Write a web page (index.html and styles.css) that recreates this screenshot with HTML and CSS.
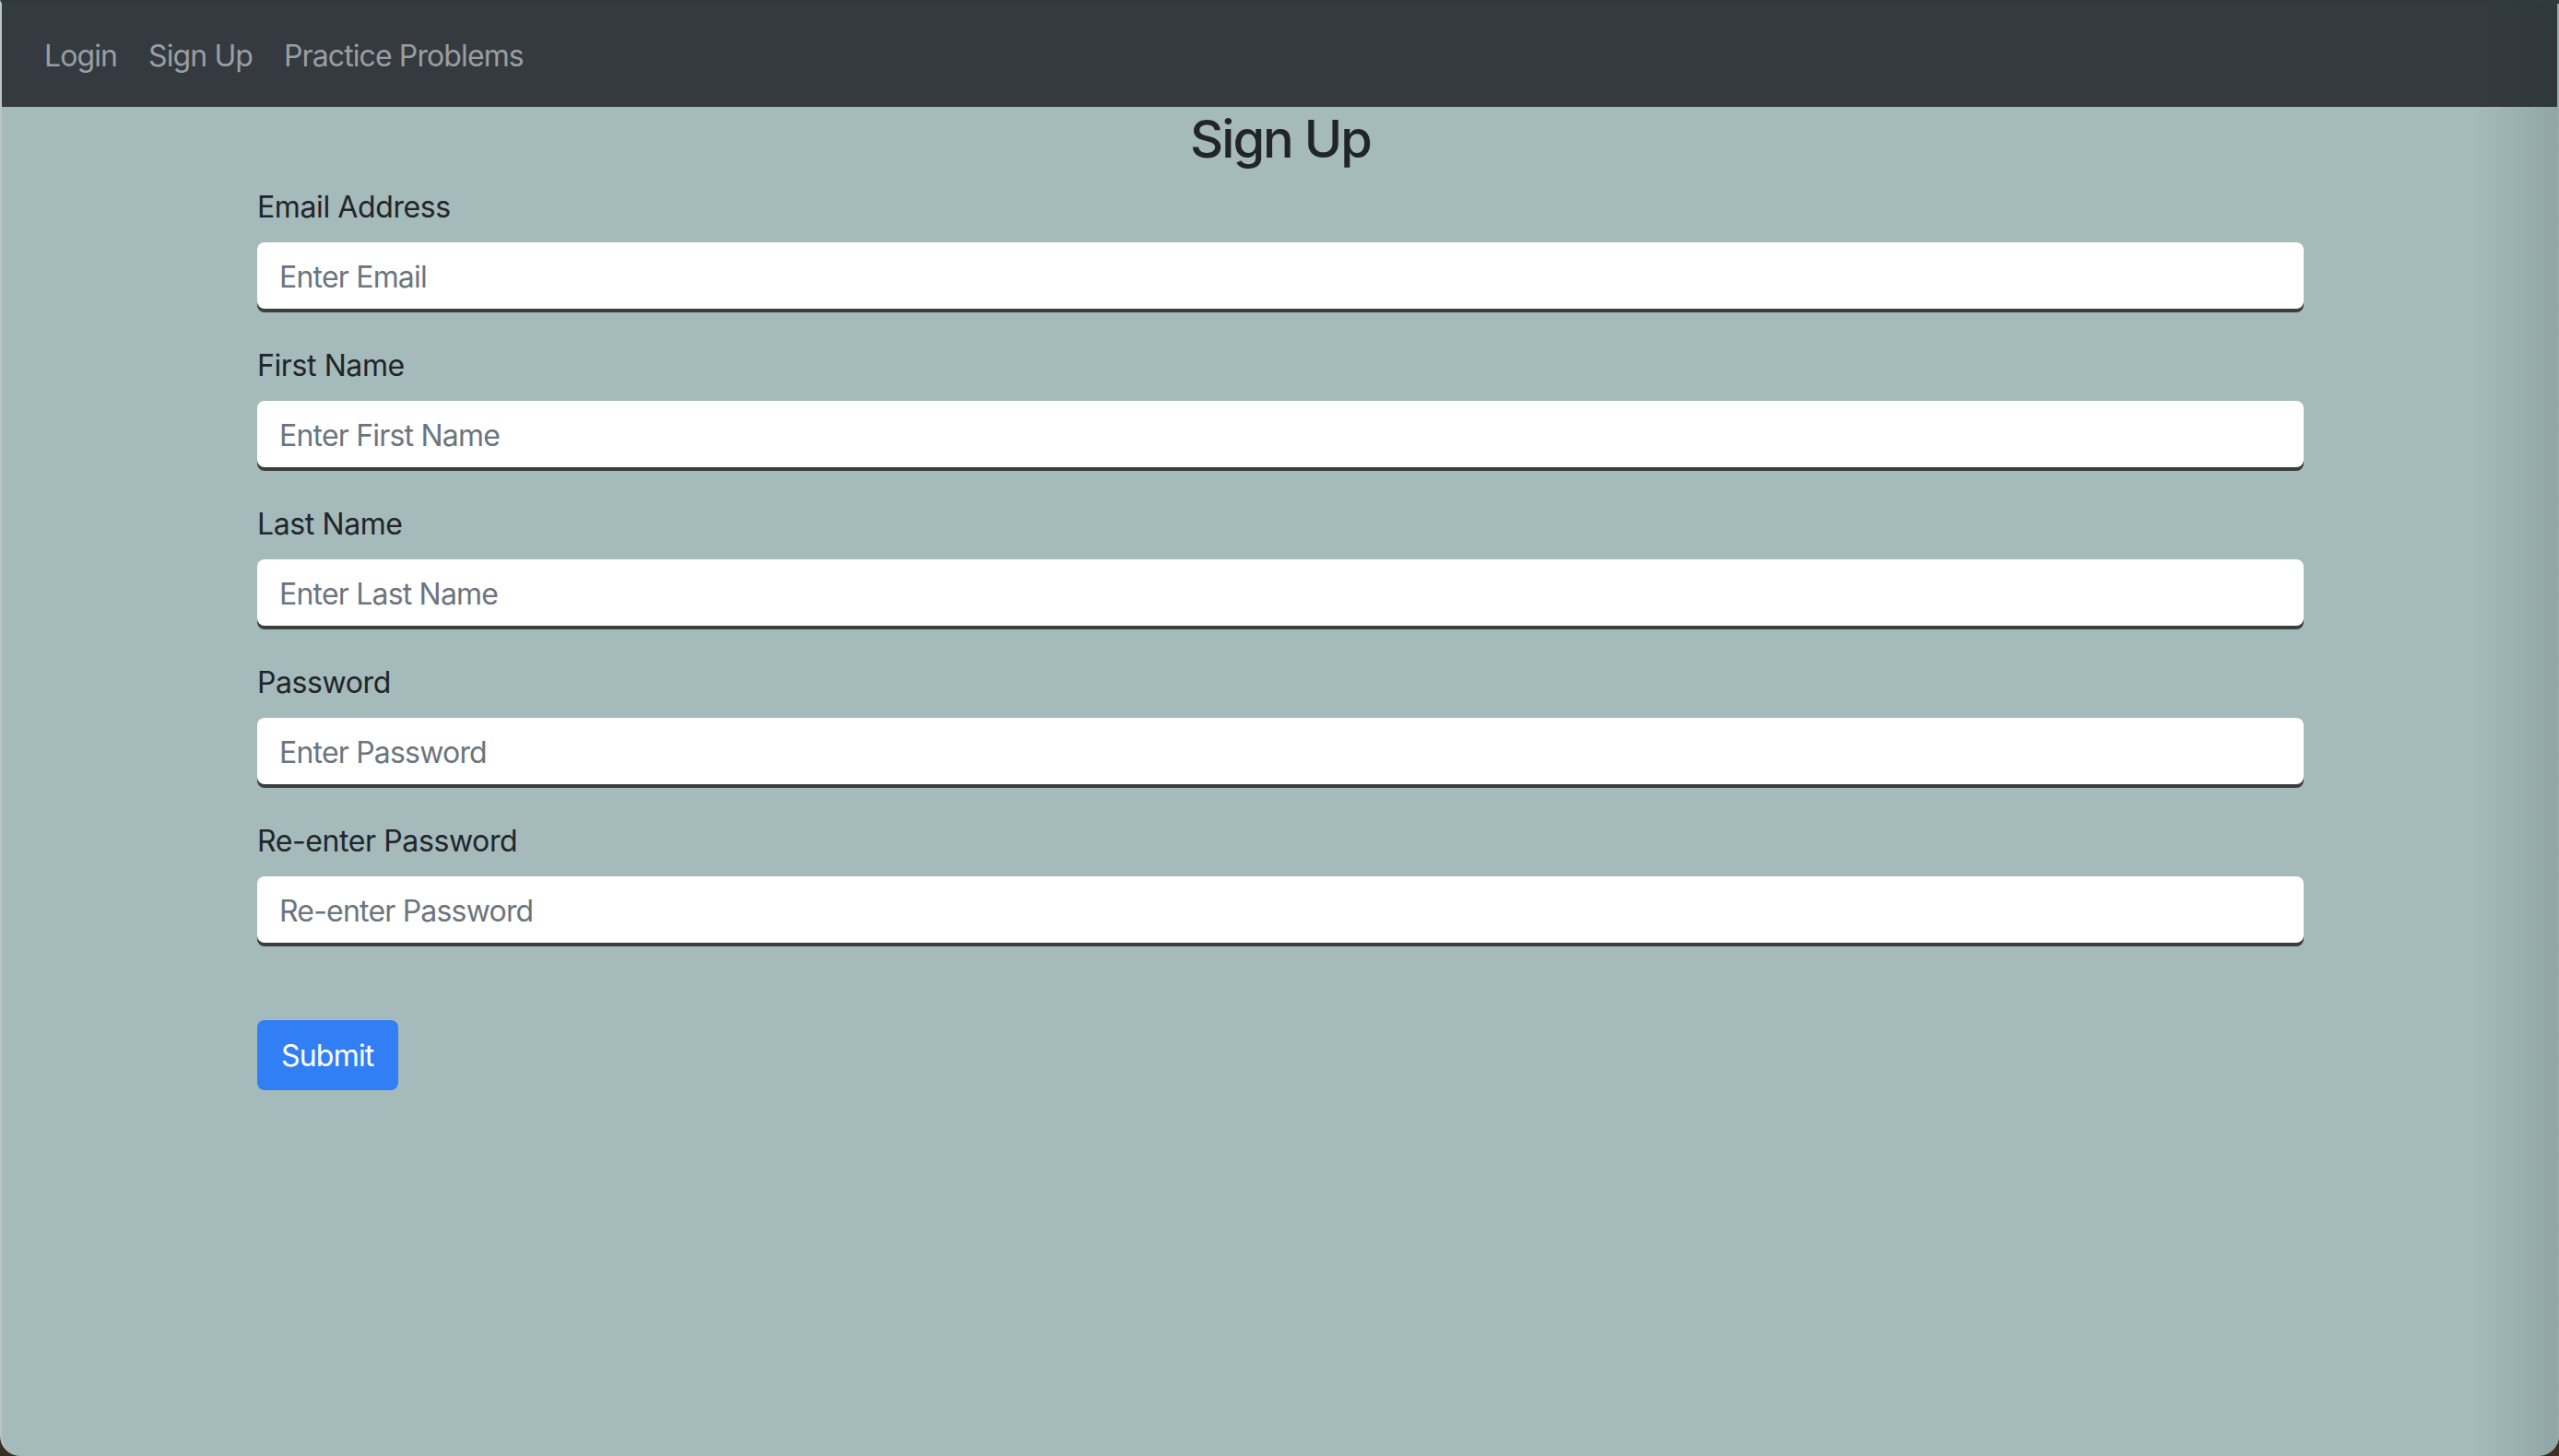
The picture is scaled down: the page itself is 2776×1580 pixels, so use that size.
FILE: index.html
```html
<!DOCTYPE html>
<html lang="en">
<head>
<meta charset="utf-8">
<title>Sign Up</title>
<link rel="stylesheet" href="styles.css">
</head>
<body>
<div class="window">
  <nav class="navbar">
    <a class="nav-link" href="#">Login</a>
    <a class="nav-link" href="#">Sign Up</a>
    <a class="nav-link" href="#">Practice Problems</a>
  </nav>
  <main class="container">
    <h3 class="title">Sign Up</h3>
    <form class="form">
      <div class="form-group">
        <label class="label" for="email">Email Address</label>
        <input class="form-control" id="email" type="email" placeholder="Enter Email">
      </div>
      <div class="form-group">
        <label class="label" for="first">First Name</label>
        <input class="form-control" id="first" type="text" placeholder="Enter First Name">
      </div>
      <div class="form-group">
        <label class="label" for="last">Last Name</label>
        <input class="form-control" id="last" type="text" placeholder="Enter Last Name">
      </div>
      <div class="form-group">
        <label class="label" for="pw">Password</label>
        <input class="form-control" id="pw" type="password" placeholder="Enter Password">
      </div>
      <div class="form-group">
        <label class="label" for="pw2">Re-enter Password</label>
        <input class="form-control" id="pw2" type="password" placeholder="Re-enter Password">
      </div>
      <button class="btn" type="submit">Submit</button>
    </form>
  </main>
  <div class="edge-shade"></div>
</div>
</body>
</html>
```
FILE: styles.css
```css
html, body {
  margin: 0;
  padding: 0;
  height: 100%;
  background: #3b301f;
}
body {
  font-family: Inter, "Liberation Sans", sans-serif;
  color: #212529;
  letter-spacing: -0.025em;
  overflow: hidden;
}
.window {
  position: relative;
  height: 1576px;
  background: #a5babb;
  border-top: 4px solid #2e3b38;
  border-left: 2px solid #b9c6c7;
  border-radius: 0 0 22px 22px;
  overflow: hidden;
  display: flex;
  flex-direction: column;
}
.navbar {
  background: #343a40;
  height: 112px;
  box-sizing: border-box;
  padding: 2px 30px 0 29px;
  display: flex;
  align-items: center;
}
.nav-link {
  color: #9a9ea2;
  text-decoration: none;
  font-size: 32px;
  line-height: 48px;
  letter-spacing: -0.028em;
  padding: 0 17px;
}
.container {
  width: 2220px;
  margin: 0 auto;
}
.title {
  margin: 0 0 16px;
  padding-top: 2px;
  height: 65px;
  font-size: 56px;
  font-weight: 500;
  line-height: 67px;
  letter-spacing: -0.035em;
  text-align: center;
  color: #212529;
}
.form {
  display: flex;
  flex-direction: column;
}
.form-group {
  display: flex;
  flex-direction: column;
  margin-bottom: 32px;
}
.label {
  font-size: 32px;
  line-height: 48px;
  padding-top: 2px;
  margin-bottom: 14px;
  color: #212529;
}
.form-control {
  box-sizing: border-box;
  height: 72px;
  margin-bottom: 4px;
  width: 100%;
  border: none;
  border-radius: 8px;
  background: #fff;
  box-shadow: 0 4px 0 #3c3e3e;
  padding: 2px 24px 0;
  font-family: inherit;
  font-size: 32px;
  letter-spacing: -0.025em;
  color: #495057;
  outline: none;
}
.form-control::placeholder {
  color: #6c757d;
}
.btn {
  align-self: flex-start;
  margin-top: 48px;
  height: 76px;
  padding: 2px 26px 0;
  border: none;
  border-radius: 8px;
  background: #327ff5;
  color: #fff;
  font-family: inherit;
  font-size: 32px;
  line-height: 48px;
  letter-spacing: -0.025em;
}
.edge-shade {
  position: absolute;
  top: 0;
  right: 0;
  bottom: 0;
  width: 90px;
  background: linear-gradient(to right, rgba(0,0,0,0), rgba(20,40,40,0.14));
  border-right: 2px solid #9aa8a8;
  pointer-events: none;
}
```
